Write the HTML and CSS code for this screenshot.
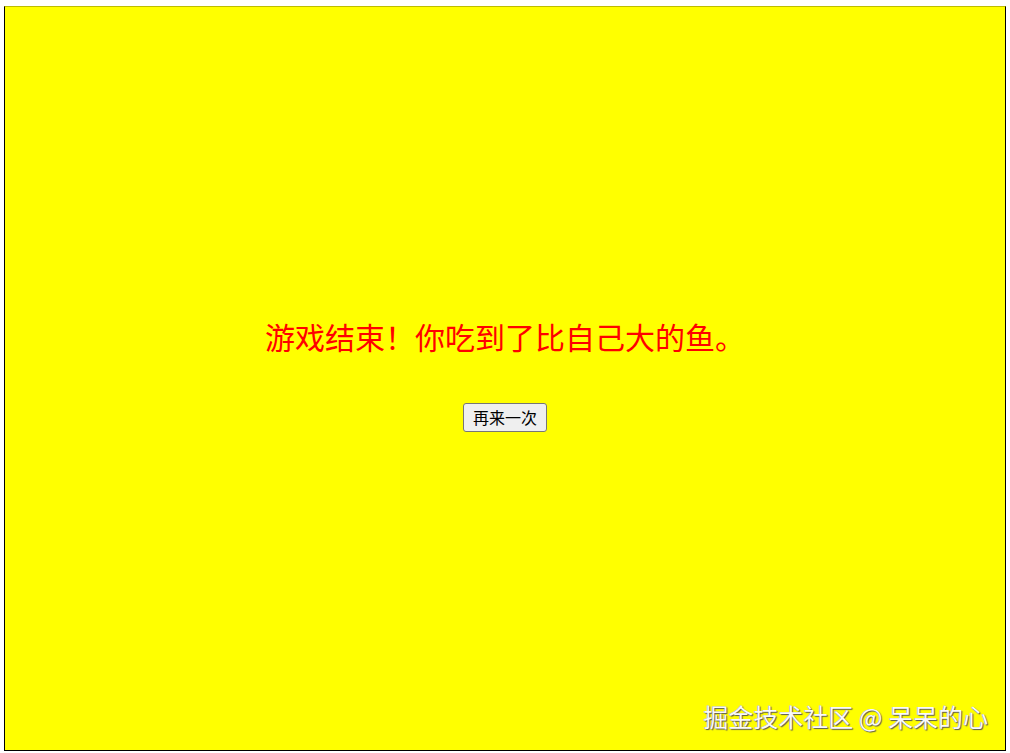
FILE: index.html
```html
<!DOCTYPE html>
<html lang="zh">
<head>
<meta charset="utf-8">
<title>游戏结束</title>
<link rel="stylesheet" href="styles.css">
</head>
<body>
<div class="stage">
  <div class="over">
    <h1 class="msg">游戏结束！你吃到了比自己大的鱼。</h1>
    <button class="again">再来一次</button>
  </div>
</div>
<div class="mark">掘金技术社区 @ 呆呆的心</div>
</body>
</html>
```
FILE: styles.css
```css
html, body {
  margin: 0;
  padding: 0;
  background: #ffffff;
}
body {
  padding: 6px 4px 2px 4px;
  font-family: "Noto Sans CJK SC", "Noto Sans", sans-serif;
}
.stage {
  box-sizing: border-box;
  width: 1002px;
  height: 745px;
  background: #ffff00;
  border: 1px solid #000;
  border-top-color: #bdbd00;
  display: flex;
  align-items: center;
  justify-content: center;
}
.over {
  display: flex;
  flex-direction: column;
  align-items: center;
  gap: 50px;
  margin-top: -7px;
}
.msg {
  margin: 0;
  font-size: 30px;
  line-height: 34px;
  font-weight: normal;
  color: #ff0000;
}
.again {
  font-family: "Noto Sans CJK SC", sans-serif;
  font-size: 16px;
  line-height: 23px;
  padding: 2px 9px;
  border: 1px solid #767676;
  border-radius: 3px;
  background: #efefef;
  color: #000;
}
.mark {
  position: absolute;
  right: 22px;
  bottom: 22px;
  font-size: 25px;
  line-height: 30px;
  color: #fafafa;
  text-shadow: 1px 1px 1px #555, -0.5px -0.5px 0 #888;
}
```
